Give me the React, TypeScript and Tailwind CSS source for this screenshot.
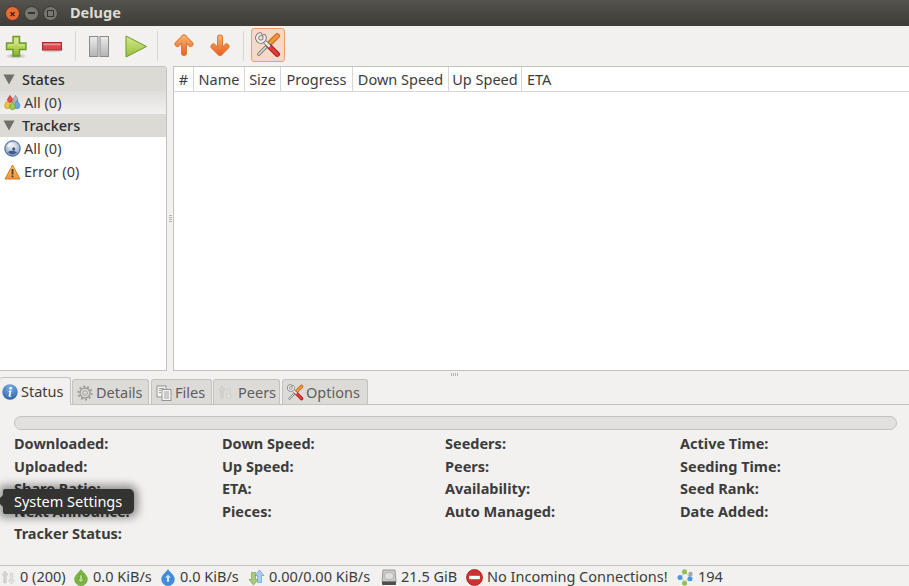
import React from 'react';

const font = { fontFamily: '"Noto Sans", sans-serif' };

function ToolSep() {
  return <div className="w-px h-[30px] bg-[#d9d7d4] mx-[9px]" />;
}

function PlusIcon() {
  return (
    <svg width="24" height="26" viewBox="0 0 24 26">
      <defs>
        <linearGradient id="gp" x1="0" y1="0" x2="0" y2="1">
          <stop offset="0" stopColor="#cfe07a" />
          <stop offset="0.55" stopColor="#b5d253" />
          <stop offset="1" stopColor="#86b033" />
        </linearGradient>
        <radialGradient id="gs">
          <stop offset="0" stopColor="#9c9a95" />
          <stop offset="1" stopColor="#f2f1f0" />
        </radialGradient>
      </defs>
      <ellipse cx="12" cy="23" rx="11" ry="2.8" fill="url(#gs)" />
      <path d="M9 3.500h6.500v6.500H22v6.500h-6.500v6.500H9v-6.500H2.500V10H9z" fill="url(#gp)" stroke="#6b9a2c" strokeWidth="1.400" />
      <path d="M10.500 5h3.500v6.500h6.500v1.500H14V11.500h-3.500V13H4v-1.500h6.500z" fill="#dcea9a" opacity="0.6" />
    </svg>
  );
}

function MinusIcon() {
  return (
    <svg width="22" height="26" viewBox="0 0 22 26">
      <ellipse cx="11" cy="18" rx="10" ry="1.500" fill="#d5d3cf" />
      <rect x="1.500" y="9.500" width="19" height="7.500" fill="#dc474d" stroke="#b3262d" />
      <rect x="2.500" y="10.500" width="17" height="1.800" fill="#ef8f92" />
    </svg>
  );
}

function PauseIcon() {
  return (
    <svg width="22" height="24" viewBox="0 0 22 24">
      <defs>
        <linearGradient id="gb" x1="0" y1="0" x2="0" y2="1">
          <stop offset="0" stopColor="#ececec" />
          <stop offset="1" stopColor="#b4b4b4" />
        </linearGradient>
      </defs>
      <rect x="1.500" y="2.500" width="8.500" height="20" fill="url(#gb)" stroke="#8b8b8b" />
      <rect x="12" y="2.500" width="8.500" height="20" fill="url(#gb)" stroke="#8b8b8b" />
    </svg>
  );
}

function PlayIcon() {
  return (
    <svg width="24" height="24" viewBox="0 0 24 24">
      <defs>
        <linearGradient id="gg" x1="0" y1="0" x2="0" y2="1">
          <stop offset="0" stopColor="#d6e88e" />
          <stop offset="1" stopColor="#95c03c" />
        </linearGradient>
      </defs>
      <path d="M2 2 22.500 12.500 2 23z" fill="url(#gg)" stroke="#6e9a22" />
    </svg>
  );
}

function ArrowIcon({ down }: { down?: boolean }) {
  const id = down ? 'gad' : 'gau';
  const d = down ? 'M10 4.500V20M3.500 13.500 10 20l6.500-6.500' : 'M10 20V4.500M3.500 11 10 4.500 16.500 11';
  return (
    <svg width="20" height="26" viewBox="0 0 20 26" fill="none" strokeLinecap="round" strokeLinejoin="round">
      <defs>
        <linearGradient id={id} gradientUnits="userSpaceOnUse" x1="0" y1="2" x2="0" y2="23">
          <stop offset="0" stopColor="#f5b878" />
          <stop offset="1" stopColor="#e8591b" />
        </linearGradient>
      </defs>
      <path d={d} stroke="#e07a33" strokeWidth="6" />
      <path d={d} stroke={`url(#${id})`} strokeWidth="4" />
    </svg>
  );
}

function ToolsIcon({ size = 26 }: { size?: number }) {
  return (
    <svg width={size} height={size} viewBox="0 0 24 24" fill="none" strokeLinecap="round">
      {/* screwdriver */}
      <path d="M3.500 20.500 12.500 11.500" stroke="#666" strokeWidth="3" />
      <path d="M3.500 20.500 12.500 11.500" stroke="#d8d8d8" strokeWidth="1.600" />
      <path d="M12 12 20.500 3.500" stroke="#c8661a" strokeWidth="5" />
      <path d="M12 12 20.500 3.500" stroke="#f0983a" strokeWidth="3" />
      {/* wrench */}
      <path d="M13.500 13.500 20.500 20.500" stroke="#a81c20" strokeWidth="5" />
      <path d="M13.500 13.500 20.500 20.500" stroke="#e23b3b" strokeWidth="3" />
      <path d="M7.500 7.500 13.500 13.500" stroke="#666" strokeWidth="3.800" strokeLinecap="butt" />
      <path d="M7.500 7.500 13.500 13.500" stroke="#ececec" strokeWidth="2.400" strokeLinecap="butt" />
      <path d="M4.900 2A3.500 3.500 0 1 0 8.500 3.700" stroke="#666" strokeWidth="3.600" />
      <path d="M4.900 2A3.500 3.500 0 1 0 8.500 3.700" stroke="#ededed" strokeWidth="2.200" />
    </svg>
  );
}

function Triangle() {
  return (
    <svg width="12" height="11" viewBox="0 0 12 11">
      <path d="M.5.500h11L6 10.500z" fill="#6f6e69" />
    </svg>
  );
}

function Drop({ x, y, s, c, o }: { x: number; y: number; s: number; c: string; o: string }) {
  return (
    <path
      d={`M${x} ${y}c${s * 0.55} ${s * 0.9} ${s} ${s * 1.2} ${s} ${s * 1.9}a${s} ${s} 0 0 1-${s * 2} 0c0-${s * 0.7} ${s * 0.45}-${s} ${s}-${s * 1.9}z`}
      fill={c}
      stroke={o}
      strokeWidth="0.7"
    />
  );
}

function StatesIcon() {
  return (
    <svg width="17" height="16" viewBox="0 0 17 16">
      <Drop x={6} y={0.5} s={2.4} c="#ea4b4b" o="#b82a2a" />
      <Drop x={11.500} y={0.5} s={2.4} c="#b5b5b5" o="#848484" />
      <Drop x={3.500} y={5.500} s={2.8} c="#edc24a" o="#b98f22" />
      <Drop x={13} y={5.500} s={2.8} c="#69a8e2" o="#3f7cb8" />
      <Drop x={8.500} y={6.500} s={2.8} c="#9ccb58" o="#6f9a30" />
    </svg>
  );
}

function GlobeIcon() {
  return (
    <svg width="17" height="17" viewBox="0 0 17 17">
      <defs>
        <radialGradient id="gl" cx="0.5" cy="0.35" r="0.75">
          <stop offset="0" stopColor="#f4f6f9" />
          <stop offset="0.6" stopColor="#a9bcd6" />
          <stop offset="1" stopColor="#4f6f9e" />
        </radialGradient>
      </defs>
      <circle cx="8.500" cy="8.500" r="7.700" fill="url(#gl)" stroke="#3d5c8c" />
      <path d="M4 12c2-1.500 6-2 9 .5-2.500 2.500-7 2.500-9-.5z" fill="#3e5a87" />
      <path d="M8 8.500l2-1.500 1.500 2.500-2 1.500z" fill="#35517d" />
      <path d="M3 6c1.500-2.500 3.500-3.500 5.500-3.500L7 5 4.500 7.500z" fill="#fff" opacity="0.75" />
    </svg>
  );
}

function WarnIcon() {
  return (
    <svg width="17" height="16" viewBox="0 0 17 16">
      <defs>
        <linearGradient id="gw" x1="0" y1="0" x2="0" y2="1">
          <stop offset="0" stopColor="#fbc57a" />
          <stop offset="1" stopColor="#f2923a" />
        </linearGradient>
      </defs>
      <path d="M8.500 1 16 15H1z" fill="url(#gw)" stroke="#dd7b18" strokeLinejoin="round" />
      <rect x="7.600" y="5" width="1.800" height="5.500" fill="#4a3a26" />
      <rect x="7.600" y="11.500" width="1.800" height="1.800" fill="#4a3a26" />
    </svg>
  );
}

function InfoIcon() {
  return (
    <svg width="16" height="16" viewBox="0 0 16 16">
      <defs>
        <radialGradient id="gi" cx="0.5" cy="0.25" r="0.85">
          <stop offset="0" stopColor="#7fb0e6" />
          <stop offset="1" stopColor="#245a9e" />
        </radialGradient>
      </defs>
      <circle cx="8" cy="8" r="7.700" fill="url(#gi)" />
      <circle cx="8.700" cy="4.200" r="1.300" fill="#fff" />
      <path d="M7.200 6.500h2.300L8.400 11.500c-.1.500.3.500 1 .2l-.1.700c-1.500.7-3 .5-2.700-.9l.8-3.600-.8-.2z" fill="#fff" />
    </svg>
  );
}

function GearIcon() {
  return (
    <svg width="16" height="16" viewBox="0 0 16 16" fill="none" stroke="#9b9b98">
      <circle cx="8" cy="8" r="2.300" />
      <circle cx="8" cy="8" r="5" strokeWidth="1.300" />
      <circle cx="8" cy="8" r="6.600" strokeWidth="1.800" strokeDasharray="2 2.150" />
    </svg>
  );
}

function FilesIcon() {
  return (
    <svg width="16" height="16" viewBox="0 0 16 16" fill="#f4f4f3" stroke="#8d8d8a" strokeWidth="0.9">
      <rect x="1" y="1" width="9" height="11" />
      <rect x="6" y="4.500" width="9" height="11" />
      <path d="M3 3.500h5M3 5.500h2M3 7.500h2M8 7h5M8 9h5M8 11h5M8 13h5" strokeWidth="0.8" />
    </svg>
  );
}

function PeersArrows() {
  return (
    <svg width="15" height="15" viewBox="0 0 15 15">
      <path d="M4 1 7 5H5.200v8H2.800V5H1z" fill="#d5d5d1" stroke="#bfbfbb" strokeWidth="0.5" />
      <path d="M10.500 14 7.500 10h1.800V3h2.400v7h1.800z" fill="#e2e2de" stroke="#c2c2be" strokeWidth="0.5" />
    </svg>
  );
}

function DownIcon() {
  return (
    <svg width="16" height="17" viewBox="0 0 15 16">
      <path d="M7.500.5c2 3 6 5.500 6 9.200a6 6 0 0 1-12 0C1.500 6 5.500 3.500 7.500.5z" fill="#7cb342" stroke="#649a30" strokeWidth="0.5" />
      <path d="M6 5.500h3v4h2l-3.500 3.500L4 9.500h2z" fill="#b7d98a" stroke="#5c8f2c" strokeWidth="0.6" />
    </svg>
  );
}

function UpIcon() {
  return (
    <svg width="16" height="17" viewBox="0 0 15 16">
      <path d="M7.500.5c2 3 6 5.500 6 9.200a6 6 0 0 1-12 0C1.500 6 5.500 3.500 7.500.5z" fill="#3f8fe0" stroke="#2f78c4" strokeWidth="0.5" />
      <path d="M7.500 5 11 8.500H9v4H6v-4H4z" fill="#cfe4fa" stroke="#2b6fb8" strokeWidth="0.6" />
    </svg>
  );
}

function UpDownIcon() {
  return (
    <svg width="17" height="17" viewBox="0 0 17 17">
      <path d="M5.500 16 1 10.500h2.500V3.500h4v7H10z" fill="#a8cc7c" stroke="#6f9a45" strokeWidth="0.6" />
      <path d="M11.500 1 16 6.500h-2.500v7h-4v-7H7z" fill="#a9cdf0" stroke="#5a8fc4" strokeWidth="0.6" />
    </svg>
  );
}

function DiskIcon() {
  return (
    <svg width="16" height="17" viewBox="0 0 16 17">
      <path d="M2 1h12l1 12H1z" fill="#c9c9c7" stroke="#888" strokeWidth="0.8" />
      <ellipse cx="8" cy="7" rx="4.500" ry="3.500" fill="#dededc" stroke="#a5a5a3" strokeWidth="0.6" />
      <rect x="1" y="12.500" width="14" height="3.500" rx="0.8" fill="#4f4f4d" />
    </svg>
  );
}

function NoEntryIcon() {
  return (
    <svg width="17" height="17" viewBox="0 0 16 16">
      <circle cx="8" cy="8" r="7.500" fill="#cf2f2f" stroke="#a82020" strokeWidth="0.8" />
      <rect x="3" y="6.400" width="10" height="3.200" fill="#fff" />
    </svg>
  );
}

function DhtIcon() {
  return (
    <svg width="17" height="17" viewBox="0 0 17 17">
      <path d="M8 3 4 8l4 5M8 3l5 5-5 5" stroke="#b5b5b5" strokeWidth="0.8" fill="none" />
      <circle cx="7.500" cy="2.800" r="2.500" fill="#8cc152" />
      <circle cx="13.500" cy="5" r="2.200" fill="#a5a5a5" />
      <circle cx="3" cy="8.500" r="2.500" fill="#4c96e0" />
      <circle cx="13" cy="9.800" r="2.500" fill="#4c96e0" />
      <circle cx="7.500" cy="14.200" r="2.500" fill="#8cc152" />
    </svg>
  );
}

function ColHead({ label, className }: { label: string; className: string }) {
  return (
    <div className={`h-full flex items-center justify-center pt-[1px] border-r border-[#d8d6d3] ${className}`}>{label}</div>
  );
}

function Tab({ icon, label, className, active }: { icon: React.ReactNode; label: string; className: string; active?: boolean }) {
  if (active) {
    return (
      <div className={`h-[28px] flex items-center gap-[3px] pl-[2px] bg-[#f2f1f0] border border-b-0 border-l-0 border-[#c4c2bd] rounded-t-[3px] text-[#3c3c3c] z-10 -mb-px ${className}`}>
        {icon}
        <span>{label}</span>
      </div>
    );
  }
  return (
    <div className={`h-[25px] flex items-center pl-[4px] pt-[1px] bg-[#dddbd8] border border-b-0 border-[#c4c2bd] rounded-t-[3px] text-[#5e5e5c] ${className}`}>
      {icon}
      <span>{label}</span>
    </div>
  );
}

function Field({ label }: { label: string }) {
  return <div className="h-[22.5px] leading-[22.5px] font-bold text-[#3c3c3c] whitespace-nowrap">{label}</div>;
}

function StatusItem({ icon, label, className }: { icon: React.ReactNode; label: string; className: string }) {
  return (
    <div className={`flex items-center gap-[4px] whitespace-nowrap ${className}`}>
      {icon}
      <span>{label}</span>
    </div>
  );
}

export default function App() {
  return (
    <div className="relative w-[909px] h-[586px] overflow-hidden flex flex-col bg-[#f2f1f0] text-[14.5px] text-[#3c3c3c]" style={font}>
      {/* Title bar */}
      <div className="h-[26px] shrink-0 flex items-center bg-gradient-to-b from-[#55534d] to-[#3d3c37] pl-[5px]">
        <div className="w-[15px] h-[15px] rounded-full bg-[#ec6a36] border border-[#5a3020] flex items-center justify-center text-[11px] leading-none text-[#40200f] font-bold">×</div>
        <div className="w-[15px] h-[15px] rounded-full ml-[4px] bg-[#77766f] border border-[#3a3934] flex items-center justify-center">
          <div className="w-[7px] h-[1.5px] bg-[#35342f]" />
        </div>
        <div className="w-[15px] h-[15px] rounded-full ml-[4px] bg-[#77766f] border border-[#3a3934] flex items-center justify-center">
          <div className="w-[7px] h-[7px] border border-[#35342f]" />
        </div>
        <span className="ml-[12px] font-bold text-[#dfdbd2]">Deluge</span>
      </div>

      {/* Toolbar */}
      <div className="h-[40px] shrink-0 flex items-center pl-[4px]">
        <PlusIcon />
        <div className="ml-[13px]"><MinusIcon /></div>
        <div className="ml-[3px]"><ToolSep /></div>
        <div className="ml-[3px]"><PauseIcon /></div>
        <div className="ml-[14px]"><PlayIcon /></div>
        <ToolSep />
        <div className="ml-[7px]"><ArrowIcon /></div>
        <div className="ml-[16px]"><ArrowIcon down /></div>
        <div className="ml-[4px]"><ToolSep /></div>
        <div className="w-[34px] h-[34px] mb-[2px] -ml-[2px] flex items-center justify-center rounded-[3px] bg-[#f6d9c6] border border-[#eb9f70]">
          <ToolsIcon />
        </div>
      </div>

      {/* Panes */}
      <div className="h-[305px] shrink-0 flex items-stretch">
        <div className="w-[167px] shrink-0 bg-white border-t border-r border-b border-[#c4c2bd] rounded-tr-[3px] overflow-hidden">
          <div className="h-[24px] flex items-center pt-[1px] bg-[#dcdad5] font-medium text-[#2c2c2c]">
            <div className="ml-[3px] w-[12px]"><Triangle /></div>
            <span className="ml-[7px]">States</span>
          </div>
          <div className="h-[23px] flex items-center bg-gradient-to-b from-[#e0dedb] to-[#f2f1f0]">
            <div className="ml-[4px]"><StatesIcon /></div>
            <span className="ml-[3px]">All (0)</span>
          </div>
          <div className="h-[23px] flex items-center bg-[#dcdad5] font-medium text-[#2c2c2c]">
            <div className="ml-[3px] w-[12px]"><Triangle /></div>
            <span className="ml-[7px]">Trackers</span>
          </div>
          <div className="h-[23px] flex items-center">
            <div className="ml-[4px]"><GlobeIcon /></div>
            <span className="ml-[3px]">All (0)</span>
          </div>
          <div className="h-[23px] flex items-center">
            <div className="ml-[4px]"><WarnIcon /></div>
            <span className="ml-[3px]">Error (0)</span>
          </div>
        </div>
        <div className="w-[6px] shrink-0 flex items-center justify-center">
          <div className="w-[3px] h-[8px] bg-[repeating-linear-gradient(#b5b3ae_0_1px,transparent_1px_2px)]" />
        </div>
        <div className="flex-1 bg-white border-t border-l border-b border-[#c4c2bd] overflow-hidden">
          <div className="h-[25px] flex items-center border-b border-[#d8d6d3] whitespace-nowrap text-[#3c3c3c]">
            <ColHead label="#" className="w-[20px]" />
            <ColHead label="Name" className="w-[51px]" />
            <ColHead label="Size" className="w-[36px]" />
            <ColHead label="Progress" className="w-[72px]" />
            <ColHead label="Down Speed" className="w-[96px]" />
            <ColHead label="Up Speed" className="w-[73px]" />
            <div className="pl-[5px] pt-[1px]">ETA</div>
          </div>
        </div>
      </div>

      {/* Horizontal handle */}
      <div className="h-[7px] shrink-0 flex items-center justify-center">
        <div className="w-[8px] h-[3px] bg-[repeating-linear-gradient(90deg,#b5b3ae_0_1px,transparent_1px_2px)]" />
      </div>

      {/* Tabs */}
      <div className="h-[27px] shrink-0 flex items-end border-b border-[#c4c2bd]">
        <Tab active icon={<InfoIcon />} label="Status" className="w-[71px] gap-[3px]" />
        <Tab icon={<GearIcon />} label="Details" className="w-[77px] ml-[1px] gap-[3px]" />
        <Tab icon={<FilesIcon />} label="Files" className="w-[61px] ml-[2px] gap-[3px]" />
        <Tab icon={<PeersArrows />} label="Peers" className="w-[67px] ml-[1px] gap-[5px]" />
        <Tab icon={<ToolsIcon size={17} />} label="Options" className="w-[86px] ml-[2px] gap-[2px]" />
      </div>

      {/* Status panel */}
      <div className="flex-1 px-[14px] pt-[11px]">
        <div className="h-[14px] mr-[-2px] rounded-full bg-[#e2e1df] border border-[#c4c2bd]" />
        <div className="flex mt-[2px]">
          <div className="w-[208px]">
            <Field label="Downloaded:" />
            <Field label="Uploaded:" />
            <Field label="Share Ratio:" />
            <Field label="Next Announce:" />
            <Field label="Tracker Status:" />
          </div>
          <div className="w-[223px]">
            <Field label="Down Speed:" />
            <Field label="Up Speed:" />
            <Field label="ETA:" />
            <Field label="Pieces:" />
          </div>
          <div className="w-[235px]">
            <Field label="Seeders:" />
            <Field label="Peers:" />
            <Field label="Availability:" />
            <Field label="Auto Managed:" />
          </div>
          <div>
            <Field label="Active Time:" />
            <Field label="Seeding Time:" />
            <Field label="Seed Rank:" />
            <Field label="Date Added:" />
          </div>
        </div>
      </div>

      {/* Status bar */}
      <div className="h-[21px] shrink-0 flex items-center pt-[2px] border-t border-[#c4c2bd] text-[#3c3c3c] pl-[1px]">
        <StatusItem icon={<PeersArrows />} label="0 (200)" className="w-[72px]" />
        <StatusItem icon={<DownIcon />} label="0.0 KiB/s" className="w-[87px]" />
        <StatusItem icon={<UpIcon />} label="0.0 KiB/s" className="w-[88px]" />
        <StatusItem icon={<UpDownIcon />} label="0.00/0.00 KiB/s" className="w-[133px]" />
        <StatusItem icon={<DiskIcon />} label="21.5 GiB" className="w-[85px]" />
        <StatusItem icon={<NoEntryIcon />} label="No Incoming Connections!" className="w-[211px]" />
        <StatusItem icon={<DhtIcon />} label="194" className="" />
      </div>

      {/* Launcher tooltip */}
      <div className="absolute left-[3px] top-[489px] h-[25px] w-[131px] flex items-center pl-[11px] rounded-r-[5px] rounded-l-[2px] bg-[#333331] text-white shadow-[0_0_8px_4px_rgba(0,0,0,0.4)] whitespace-nowrap">
        <div className="absolute -left-[4px] top-[7px] w-[10px] h-[10px] rotate-45 bg-[#333331]" />
        <span className="relative">System Settings</span>
      </div>
    </div>
  );
}
